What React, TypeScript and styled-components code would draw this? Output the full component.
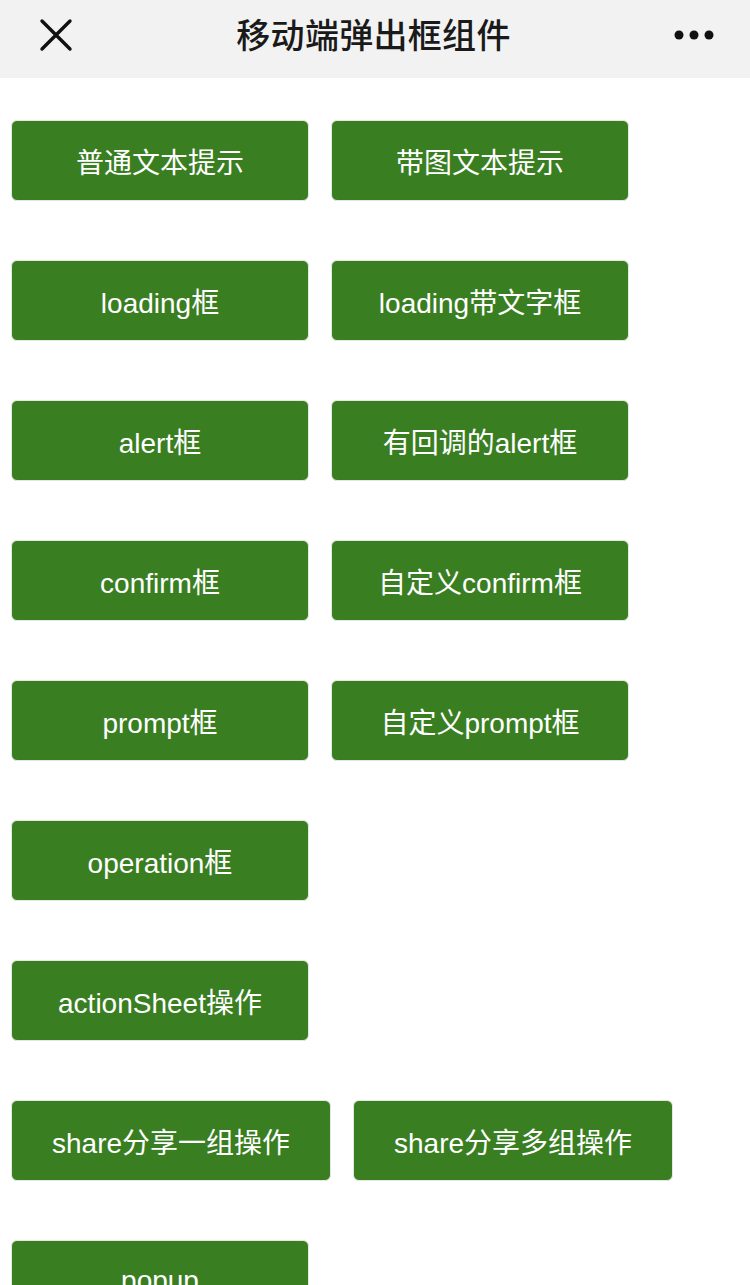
import React from "react";
import styled, { createGlobalStyle } from "styled-components";

const rows: string[][] = [
  ["普通文本提示", "带图文本提示"],
  ["loading框", "loading带文字框"],
  ["alert框", "有回调的alert框"],
  ["confirm框", "自定义confirm框"],
  ["prompt框", "自定义prompt框"],
  ["operation框"],
  ["actionSheet操作"],
  ["share分享一组操作", "share分享多组操作"],
  ["popup"],
];

export default function App() {
  return (
    <>
      <GlobalStyle />
      <Page>
        <Header>
          <IconButton aria-label="close">
            <svg width="34" height="34" viewBox="0 0 34 34">
              <path
                d="M3 3 L31 31 M31 3 L3 31"
                stroke="#111"
                strokeWidth="3.4"
                strokeLinecap="round"
              />
            </svg>
          </IconButton>
          <Title>移动端弹出框组件</Title>
          <IconButton aria-label="more">
            <svg width="44" height="10" viewBox="0 0 44 10">
              <circle cx="5" cy="5" r="4.5" fill="#111" />
              <circle cx="20" cy="5" r="4.5" fill="#111" />
              <circle cx="35" cy="5" r="4.5" fill="#111" />
            </svg>
          </IconButton>
        </Header>

        <List>
          {rows.map((row, i) => (
            <Row key={i}>
              {row.map((label) => (
                <Button key={label}>{label}</Button>
              ))}
            </Row>
          ))}
        </List>
      </Page>
    </>
  );
}

// SECTION styled
const GlobalStyle = createGlobalStyle`
  html, body {
    margin: 0;
    padding: 0;
    background: #fff;
    font-family: "Liberation Sans", "Noto Sans CJK SC", sans-serif;
  }
`;

const Page = styled.div`
  width: 750px;
  height: 1285px;
  overflow: hidden;
`;

const Header = styled.div`
  height: 78px;
  background-color: #f2f2f2;
  display: flex;
  align-items: center;
  justify-content: space-between;
  padding: 0 32px 0 39px;
  box-sizing: border-box;
`;

const IconButton = styled.div`
  display: flex;
  align-items: center;
  justify-content: center;
  padding-bottom: 8px;
`;

const Title = styled.div`
  font-family: "Noto Sans CJK SC", sans-serif;
  font-size: 34px;
  font-weight: 500;
  color: #1a1a1a;
  letter-spacing: 0.3px;
  padding-bottom: 12px;
`;

const List = styled.div`
  display: flex;
  flex-direction: column;
  gap: 59px;
  padding: 42px 0 0 11px;
`;

const Row = styled.div`
  display: flex;
  gap: 22px;
`;

const Button = styled.button`
  min-width: 298px;
  height: 81px;
  padding: 0 40px;
  box-sizing: border-box;
  background-color: #3a7e22;
  border: 1px solid #e4e8e2;
  border-radius: 6px;
  color: #fff;
  font-family: "Liberation Sans", "Noto Sans CJK SC", sans-serif;
  font-size: 28px;
  white-space: nowrap;
`;
// !SECTION styled
